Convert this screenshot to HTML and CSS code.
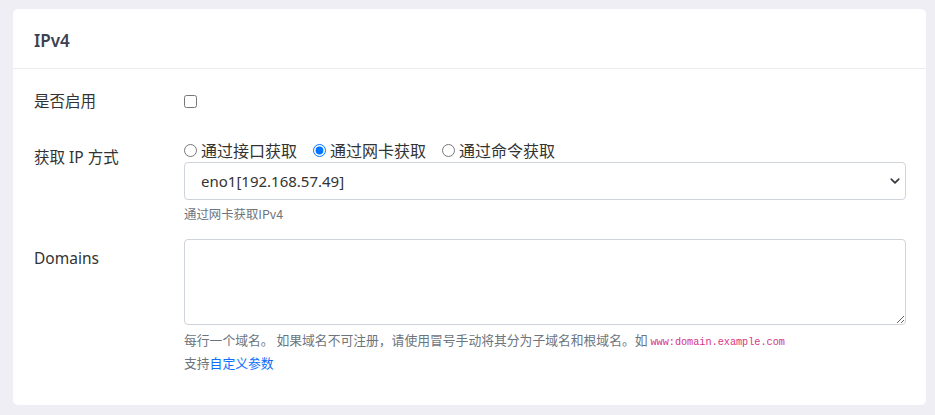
FILE: index.html
```html
<!DOCTYPE html>
<html lang="zh-CN">
<head>
<meta charset="utf-8">
<link rel="stylesheet" href="styles.css">
</head>
<body>
<div class="card">
  <div class="card-header">IPv4</div>
  <div class="card-body">
    <div class="row row-center">
      <div class="label">是否启用</div>
      <div class="field"><input type="checkbox" class="check"></div>
    </div>
    <div class="row">
      <div class="label pad">获取 IP 方式</div>
      <div class="field">
        <div class="radios">
          <label class="radio"><input type="radio" name="m"><span>通过接口获取</span></label>
          <label class="radio"><input type="radio" name="m" checked><span>通过网卡获取</span></label>
          <label class="radio"><input type="radio" name="m"><span>通过命令获取</span></label>
        </div>
        <div class="select-wrap">
          <select class="select"><option>eno1[192.168.57.49]</option></select>
          <svg class="chev" width="10" height="10" viewBox="0 0 16 16"><path d="M2 5l6 6 6-6" fill="none" stroke="#343a40" stroke-width="2.6" stroke-linecap="round" stroke-linejoin="round"/></svg>
        </div>
        <div class="help help-one">通过网卡获取IPv4</div>
      </div>
    </div>
    <div class="row">
      <div class="label pad">Domains</div>
      <div class="field">
        <textarea class="textarea"></textarea>
        <div class="help help-lines">每行一个域名。 如果域名不可注册，请使用冒号手动将其分为子域名和根域名。如 <code>www:domain.example.com</code><br>支持<a href="#" class="link">自定义参数</a></div>
      </div>
    </div>
  </div>
</div>
</body>
</html>
```
FILE: styles.css
```css
* { box-sizing: border-box; }
html, body { margin: 0; padding: 0; }
body {
  background: #eeeef4;
  font-family: "Noto Sans", "Noto Sans CJK SC", sans-serif;
  color: #333;
  padding: 9px 9px 10px 13px;
}
.card {
  background: #fff;
  border-radius: 5px;
  height: 396px;
}
.card-header {
  height: 60px;
  border-bottom: 1px solid #ebebf0;
  padding: 0 21px;
  display: flex;
  align-items: center;
  font-size: 17px;
  font-weight: 600;
  color: #3d4150;
  padding-top: 4px;
}
.card-body {
  padding: 20px 20px 0 21px;
}
.row {
  display: flex;
  margin-bottom: 16px;
}
.row-center { align-items: center; margin-bottom: 25px; }
.label {
  width: 150px;
  flex: none;
  font-size: 15.5px;
  line-height: 24px;
  font-family: "Noto Sans", "Noto Sans CJK SC", sans-serif;
  color: #333;
}
.label.pad { padding-top: 7px; }
.field { flex: 1; min-width: 0; }
.check { width: 13px; height: 13px; margin: 0; display: block; }
.radios { display: flex; height: 24px; align-items: center; }
.radio {
  display: flex;
  align-items: center;
  font-size: 16px;
  margin-right: 16px;
  color: #333;
}
.radio input { width: 13px; height: 13px; margin: 0 4px 0 0; }
.select-wrap { position: relative; }
.select {
  display: block;
  width: 100%;
  height: 38px;
  appearance: none;
  -webkit-appearance: none;
  border: 1px solid #ced4da;
  border-radius: 4px;
  background: #fff;
  padding: 0 36px 0 16px;
  font-family: "Noto Sans", "Noto Sans CJK SC", sans-serif;
  font-size: 15px;
  color: #333;
}
.chev {
  position: absolute;
  right: 6px;
  top: 14px;
  pointer-events: none;
}
.help {
  font-size: 12.8px;
  color: #6c757d;
  line-height: 18px;
  margin-top: 5px;
  font-family: "Noto Sans CJK SC", sans-serif;
}
.help-one { font-size: 12.4px; }
.help-lines { line-height: 20px; margin-top: 5px; }
.textarea {
  display: block;
  width: 100%;
  height: 86px;
  border: 1px solid #ced4da;
  border-radius: 4px;
  resize: vertical;
  font-family: inherit;
}
code {
  font-family: "Liberation Mono", monospace;
  font-size: 10.2px;
  color: #d63384;
}
.link { color: #0d6efd; text-decoration: none; }
```
